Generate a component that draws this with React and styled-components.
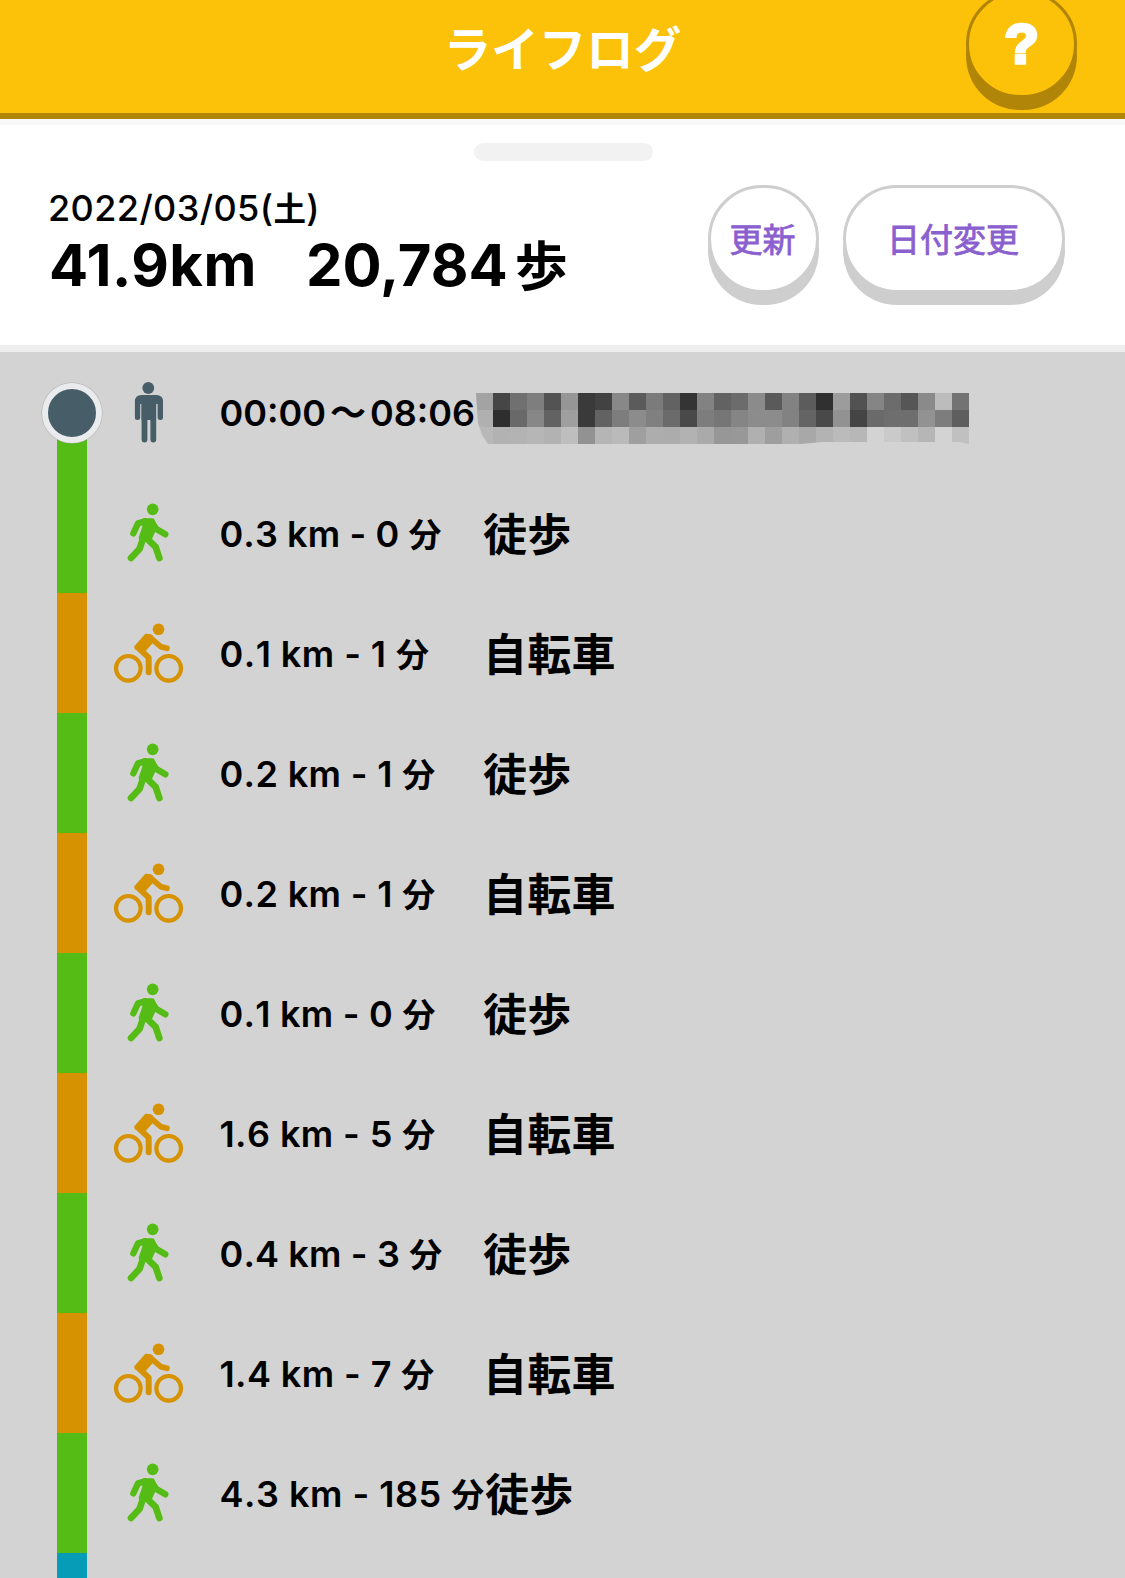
import React from "react";
import styled, { createGlobalStyle } from "styled-components";

const GlobalStyle = createGlobalStyle`
  * { box-sizing: border-box; }
  body { margin: 0; background: #d3d3d3; }
`;

const Page = styled.div`
  width: 1125px;
  height: 1578px;
  overflow: hidden;
  display: flex;
  flex-direction: column;
  background: #d3d3d3;
  color: #000;
  font-family: Inter, "Noto Sans CJK JP", sans-serif;
`;

const Header = styled.header`
  flex: none;
  height: 119px;
  display: grid;
  grid-template-columns: 1fr auto 1fr;
  align-items: start;
  background: #fcc109;
  border-bottom: 6px solid #b08508;
`;

const Title = styled.h1`
  grid-column: 2;
  margin: 12px 0 0 0;
  font: 700 47.5px/70px "Noto Sans CJK JP", sans-serif;
  color: #fff;
`;

const PillButton = styled.button`
  flex: none;
  width: ${(p) => p.$width}px;
  height: 108px;
  padding: 0 2px 2px 0;
  margin: ${(p) => p.$margin || "0"};
  display: flex;
  align-items: center;
  justify-content: center;
  border: 3px solid ${(p) => p.$edge};
  border-radius: 55px;
  box-shadow: 0 12px 0 ${(p) => p.$edge};
  background: ${(p) => p.$fill};
  color: ${(p) => p.$ink};
  font: 400 33px/48px "Noto Sans CJK JP", sans-serif;
  -webkit-text-stroke: 0.8px ${(p) => p.$ink};
`;

const HelpButton = styled(PillButton)`
  grid-column: 3;
  justify-self: end;
  padding: 0;
  font: 700 56px/60px "Liberation Sans", sans-serif;
  -webkit-text-stroke: 3.5px #fff;
`;

const Summary = styled.section`
  flex: none;
  height: 233px;
  border-top: 6px solid #f9f9f9;
  border-bottom: 7px solid #eee;
  background: #fff;
  display: flex;
  flex-direction: column;
`;

const Handle = styled.div`
  width: 179px;
  height: 18px;
  margin: 18px 0 0 474px;
  border-radius: 9px;
  background: #f2f2f2;
`;

const SummaryBody = styled.div`
  display: flex;
  padding: 24px 60px 0 48px;
`;

const Totals = styled.div`
  flex: 1;
`;

const DateLine = styled.div`
  height: 44px;
  font-size: 36px;
  line-height: 44px;
  font-weight: 540;
  letter-spacing: 0.4px;
  white-space: nowrap;
`;

const Weekday = styled.span`
  font: 700 32.5px/44px "Noto Sans CJK JP", sans-serif;
`;

const TotalLine = styled.div`
  display: flex;
  padding-left: 1px;
  font-size: 58px;
  line-height: 72px;
  font-weight: 700;
  white-space: nowrap;
`;

const Distance = styled.span`
  width: 257px;
  letter-spacing: 0.5px;
`;

const Unit = styled.span`
  font: 700 53px/69px "Noto Sans CJK JP", sans-serif;
  margin-left: 7px;
`;

const Actions = styled.div`
  display: flex;
  gap: 24px;
`;

const Timeline = styled.main`
  flex: 1;
  padding-top: 1px;
`;

const Row = styled.div`
  height: 120px;
  padding-left: 42px;
  display: grid;
  grid-template-columns: 60px 92px 25.5px 1fr;
  align-items: center;
`;

const Track = styled.div`
  height: 120px;
  display: flex;
  justify-content: center;
  align-items: center;
  background: linear-gradient(${(p) => p.$color}, ${(p) => p.$color}) center bottom / 30px ${(p) => (p.$start ? "60px" : "120px")} no-repeat;
`;

const StartDot = styled.div`
  width: 60px;
  height: 60px;
  border-radius: 50%;
  border: 6px solid #e9ebec;
  background: #475e69;
  box-shadow: 0 0 0 0.5px #aaa;
`;

const IconCell = styled.div`
  display: flex;
  justify-content: center;
`;

const Line = styled.div`
  grid-column: 4;
  display: flex;
  align-items: center;
  height: 60px;
  white-space: nowrap;
`;

const Metric = styled.div`
  width: 263.5px;
  font-size: 36px;
  line-height: 60px;
  font-weight: 570;
  font-kerning: none;
  letter-spacing: ${(p) => p.$spacing}px;
`;

const TimeRange = styled(Metric)`
  width: 256.5px;
  display: flex;
  line-height: 64px;
`;

const Tilde = styled.span`
  width: 44px;
  display: flex;
  justify-content: center;
`;

const Minute = styled.span`
  font: 700 33px/60px "Noto Sans CJK JP", sans-serif;
  letter-spacing: 0;
`;

const Mode = styled.div`
  font: 700 44px/60px "Noto Sans CJK JP", sans-serif;
  letter-spacing: 0.3px;
  margin: -2px 0 0 ${(p) => (p.$shift ? "2px" : "0")};
`;

const Redacted = styled.div`
  display: grid;
  grid-template-columns: repeat(29, 17px);
  grid-auto-rows: 17px;
  margin-top: 11px;
  clip-path: polygon(0 0, 100% 0, 100% 100%, 98% 49px, 70% 49px, 66% 100%, 12px 100%, 6px 42px, 2px 30px);
`;

const Block = styled.i`
  background: ${(p) => p.$tone};
`;

const TONES = [
  "a3 46 70 7e 53 96 3a 42 88 5b 7b 62 34 82 62 6c 8b 5a 82 5c 30 9c 52 85 6c 56 8a bc 73",
  "b0 2e 69 87 62 9f 3a 62 7d 8c 80 6b 49 7d 76 85 8c 8c 82 64 49 92 44 6a 6e 6e 92 7d 5e",
  "b8 b2 b3 b6 b2 be 92 b5 ba 9f ad ac b2 aa 97 98 b0 9e b0 a8 b3 bb b7 d3 ca c0 b6 d3 c0",
].flatMap((r) => r.split(" "));

const GREEN = "#55bc15";
const ORANGE = "#d69200";

const PersonIcon = () => (
  <svg width="92" height="80" viewBox="102 373 92 80" fill="#475e69">
    <circle cx="148.3" cy="388" r="5.9" />
    <path d="M140.500 395h16q6.500 0 6.500 6.500v16q0 2.500-2.700 2.500t-2.700-2.500V404h-1.400v35.500q0 3-2.900 3t-2.900-3V420h-3v19.500q0 3-2.900 3t-2.900-3V404h-1.400v13.500q0 2.500-2.700 2.500t-2.600-2.500v-16q0-6.500 6.600-6.500z" />
    <path d="M141.500 403h14v17h-14z" />
  </svg>
);

const WalkIcon = () => (
  <svg width="92" height="80" viewBox="-24 9 276 240" fill="none" stroke={GREEN} strokeLinecap="round" strokeLinejoin="round">
    <circle cx="128" cy="58" r="17.5" fill={GREEN} stroke="none" />
    <path d="M105 94L84 100L70 130M126 98L139 117L166 133" strokeWidth="19" />
    <path d="M101 92L127 92L135 110L118 148L93 144L105 107z" fill={GREEN} strokeWidth="14" />
    <path d="M99 146L89 176L63 204M108 143L137 171L148 204" strokeWidth="20" />
  </svg>
);

const BikeIcon = () => (
  <svg width="92" height="80" viewBox="216 99 276 240" fill="none" stroke={ORANGE} strokeLinecap="round" strokeLinejoin="round">
    <circle cx="385.500" cy="148" r="17.500" fill={ORANGE} stroke="none" />
    <circle cx="295" cy="265" r="37" strokeWidth="12.500" />
    <circle cx="416" cy="265" r="37" strokeWidth="12.500" />
    <path d="M321 202L350 169L361 171L365 181L341 208z" fill={ORANGE} strokeWidth="16" />
    <path d="M360 172L392 200L411 205" strokeWidth="17" />
    <path d="M324 203L356 233L356 277" strokeWidth="18" />
  </svg>
);

const TRIPS = [
  ["walk", "0.3 km - 0 ", 0.1],
  ["bike", "0.1 km - 1 ", 0.45],
  ["walk", "0.2 km - 1 ", 0.35],
  ["bike", "0.2 km - 1 ", 0.35],
  ["walk", "0.1 km - 0 ", 0.25],
  ["bike", "1.6 km - 5 ", 0.4],
  ["walk", "0.4 km - 3 ", 0.15],
  ["bike", "1.4 km - 7 ", 0.4],
  ["walk", "4.3 km - 185 ", 0.5],
];

const MODES = {
  walk: { color: GREEN, label: "徒歩", Icon: WalkIcon },
  bike: { color: ORANGE, label: "自転車", Icon: BikeIcon },
};

export default function App() {
  return (
    <Page>
      <GlobalStyle />
      <Header>
        <Title>ライフログ</Title>
        <HelpButton $width={111} $margin="-10px 48px 0 0" $edge="#b08508" $fill="#fcc109" $ink="#fff">?</HelpButton>
      </Header>
      <Summary>
        <Handle />
        <SummaryBody>
          <Totals>
            <DateLine>2022/03/05(<Weekday>土</Weekday>)</DateLine>
            <TotalLine>
              <Distance>41.9km</Distance>
              <span>20,784</span>
              <Unit>歩</Unit>
            </TotalLine>
          </Totals>
          <Actions>
            <PillButton $width={111} $edge="#cecece" $fill="#fff" $ink="#8a60cf">更新</PillButton>
            <PillButton $width={222} $edge="#cecece" $fill="#fff" $ink="#8a60cf">日付変更</PillButton>
          </Actions>
        </SummaryBody>
      </Summary>
      <Timeline>
        <Row>
          <Track $color={GREEN} $start><StartDot /></Track>
          <IconCell><PersonIcon /></IconCell>
          <Line>
            <TimeRange $spacing={0}>00:00<Tilde>〜</Tilde>08:06</TimeRange>
            <Redacted>{TONES.map((t, i) => <Block key={i} $tone={`#${t}${t}${t}`} />)}</Redacted>
          </Line>
        </Row>
        {TRIPS.map(([mode, text, spacing], i) => {
          const { color, label, Icon } = MODES[mode];
          return (
            <Row key={i}>
              <Track $color={color} />
              <IconCell><Icon /></IconCell>
              <Line>
                <Metric $spacing={spacing}>{text}<Minute>分</Minute></Metric>
                <Mode $shift={text.length > 11}>{label}</Mode>
              </Line>
            </Row>
          );
        })}
        <Row><Track $color="#069cb8" /></Row>
      </Timeline>
    </Page>
  );
}
